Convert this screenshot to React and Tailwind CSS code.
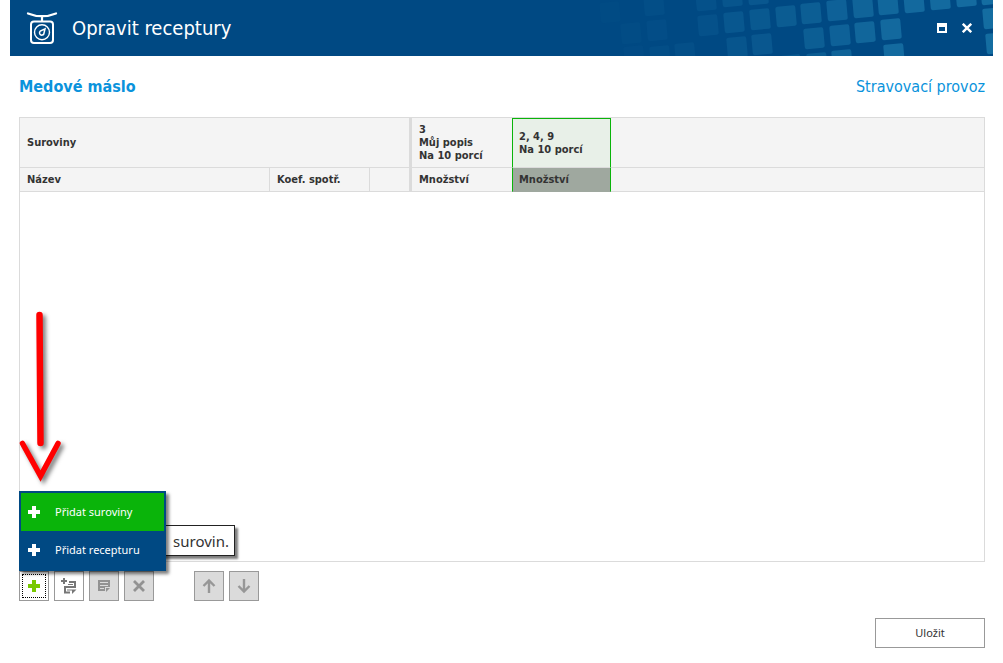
import React from "react";

const TILES = [
  [600, 2, 0.04], [644, -5, 0.1], [696, -10, 0.17], [722, -14, 0.22], [748, -16, 0.28],
  [621, 23, 0.07], [647, 20, 0.09], [698, 15, 0.17], [724, 12, 0.26], [750, 9, 0.3], [776, 6, 0.36], [801, 3, 0.4], [827, 0, 0.46], [853, -3, 0.5], [878, -6, 0.55], [904, -8, 0.6], [930, -11, 0.62], [956, -14, 0.64], [981, -16, 0.66],
  [624, 46, 0.06], [650, 46, 0.1], [675, 43, 0.12], [727, 37, 0.22], [752, 34, 0.28], [804, 28, 0.4], [830, 25, 0.46], [855, 22, 0.54], [881, 19, 0.6], [983, 8, 0.66],
  [781, 55, 0.3], [807, 53, 0.36], [832, 50, 0.48], [884, 44, 0.62], [986, 33, 0.66],
];

const Tiles = () => (
  <svg className="absolute top-0 right-0 h-full w-[403px]" viewBox="590 0 403 56" aria-hidden="true">
    {TILES.map(([x, y, o], i) => (
      <rect key={i} x={x} y={y} width="20" height="20.500" rx="2" fill="#1f7fb0" opacity={o} transform={`rotate(-5 ${x + 10} ${y + 10})`} />
    ))}
  </svg>
);

const Scale = () => (
  <svg className="size-8 shrink-0" viewBox="26 12 32 32" fill="none" stroke="#fff" aria-hidden="true">
    <path d="M28 13.400Q42 19 56 13.400M42 16v5" strokeWidth="2.2" strokeLinecap="round" />
    <rect x="31" y="21.500" width="22" height="21.500" rx="3" strokeWidth="2" />
    <circle cx="42" cy="32.300" r="7.500" strokeWidth="1.400" />
    <path d="M45 28.800L40.200 31.200a2.300 2.300 0 1 0 3.600 2.800z" strokeWidth="1.500" />
  </svg>
);

const Plus = ({ className }) => (
  <svg className={className} viewBox="0 0 12 12" fill="currentColor" aria-hidden="true">
    <path d="M4 0h4v4h4v4H8v4H4V8H0V4h4z" />
  </svg>
);

const ToolButton = ({ label, disabled, className = "", children }) => (
  <button
    type="button"
    aria-label={label}
    disabled={disabled}
    className={`flex size-[30px] items-center justify-center border border-[#999] text-[#777] ${disabled ? "bg-[#dbdbdb]" : "bg-white"} ${className}`}
  >
    {children}
  </button>
);

const Arrow = ({ down }) => (
  <svg className={`size-4 text-[#979797] ${down ? "rotate-180" : ""}`} viewBox="0 0 16 16" fill="none" stroke="currentColor" strokeWidth="2.4" aria-hidden="true">
    <path d="M8 15V2.500M2.500 8L8 2.500 13.500 8" />
  </svg>
);

export default function App() {
  return (
    <div className="flex min-h-screen flex-col bg-white px-[10px] pb-[15px] font-['DejaVu_Sans_Condensed','DejaVu_Sans',sans-serif] text-[#333]">
      <header className="relative flex h-14 items-center overflow-hidden bg-[#004983] pr-[21px] pl-4 text-white">
        <Tiles />
        <Scale />
        <h1 className="ml-3.5 grow text-[20px] leading-6">Opravit receptury</h1>
        <div className="relative flex items-center gap-[15px]">
          <button type="button" aria-label="Maximalizovat" className="h-[10px] w-[10px] border-2 border-t-4 border-white" />
          <button type="button" aria-label="Zavřít">
            <svg className="size-[10px]" viewBox="0 0 10 10" stroke="#fff" strokeWidth="2.4" aria-hidden="true">
              <path d="M.8.8l8.400 8.400M9.200.8L.8 9.200" />
            </svg>
          </button>
        </div>
      </header>

      <main className="flex grow flex-col pr-2 pl-[9px]">
        <div className="flex h-[61px] shrink-0 items-center justify-between text-[16px] leading-6 text-[#0a93dc]">
          <h2 className="font-bold">Medové máslo</h2>
          <a href="#provoz">Stravovací provoz</a>
        </div>

        <section className="relative grow border border-[#dbdbdb]">
          <table className="w-full table-fixed border-separate border-spacing-0 text-left text-[11px] leading-[13px] font-bold">
            <colgroup>
              <col className="w-[250px]" /><col className="w-[100px]" /><col className="w-[42px]" /><col className="w-[100px]" /><col className="w-[99px]" /><col />
            </colgroup>
            <thead className="bg-[#f4f4f4]">
              <tr className="h-[50px]">
                <th colSpan="3" className="border-r-3 border-b border-[#dbdbdb] px-[7px]">Suroviny</th>
                <th className="border-b border-[#dbdbdb] px-[7px]">3<br />Můj popis<br />Na 10 porcí</th>
                <th className="border border-[#0ab40a] border-b-[#dbdbdb] bg-[#e8f0e8] px-[6px]">2, 4, 9<br />Na 10 porcí</th>
                <td className="border-b border-[#dbdbdb]" />
              </tr>
              <tr className="h-6">
                <th className="border-r border-b border-[#dbdbdb] px-[7px]">Název</th>
                <th className="border-r border-b border-[#dbdbdb] px-[7px]">Koef. spotř.</th>
                <td className="border-r-3 border-b border-[#dbdbdb]" />
                <th className="border-b border-[#dbdbdb] px-[7px]">Množství</th>
                <th className="border-x border-b border-[#0ab40a] border-b-[#9fa89f] bg-[#9fa89f] px-[6px]">Množství</th>
                <td className="border-b border-[#dbdbdb]" />
              </tr>
            </thead>
          </table>

          <svg className="absolute bottom-[72px] -left-1 h-[184px] w-[54px]" viewBox="16 305 54 184" fill="none" stroke="#f00" aria-hidden="true">
            <g className="drop-shadow-[3px_3px_2px_rgba(0,0,0,0.5)]" strokeLinecap="round">
              <path d="M39.500 315L40.500 443" strokeWidth="6.500" />
              <path d="M22.500 443.500L40.500 476L58 443.500" strokeWidth="5.500" />
            </g>
          </svg>

          <div role="tooltip" className="absolute bottom-[5px] left-[119px] flex h-[31px] w-[96px] items-center justify-end border border-[#222] bg-white pr-[5px] font-['Noto_Sans',sans-serif] text-[15px] leading-6 shadow-[3px_3px_2px_rgba(0,0,0,0.5)]">
            surovin.
          </div>

          <div role="menu" className="absolute -bottom-[10px] -left-px w-[147px] border-2 border-[#004983] bg-[#004983] font-['Noto_Sans',sans-serif] text-[11px] text-white shadow-[3px_3px_3px_rgba(0,0,0,0.5)]">
            <button role="menuitem" type="button" className="flex h-[38px] w-full items-center gap-[15px] bg-[#0ab40a] pl-[7px]">
              <Plus className="size-3" />Přidat suroviny
            </button>
            <button role="menuitem" type="button" className="flex h-[38px] w-full items-center gap-[15px] pl-[7px]">
              <Plus className="size-3" />Přidat recepturu
            </button>
          </div>
        </section>

        <div className="mt-[9px] flex shrink-0 gap-[5px]">
          <button type="button" aria-label="Přidat" className="size-[30px] border border-[#999] bg-white p-[2px]">
            <span className="flex size-full items-center justify-center border border-dotted border-black text-[#78c800]">
              <Plus className="size-3" />
            </span>
          </button>
          <ToolButton label="Vložit řádek">
            <svg className="size-4" viewBox="0 0 16 16" fill="none" stroke="currentColor" aria-hidden="true">
              <path d="M0 3h6M3 0v6" strokeWidth="2" />
              <path d="M8 4h6v5H4v5.500h5" strokeWidth="2" />
              <path d="M7 6.500h5M6 12h5" />
              <path d="M11 11.500h4.500L11 16z" fill="currentColor" stroke="none" />
            </svg>
          </ToolButton>
          <ToolButton label="Upravit" disabled>
            <svg className="size-3 text-[#929292]" viewBox="0 0 12 12" fill="currentColor" aria-hidden="true">
              <path fillRule="evenodd" d="M0 0h12v7H7v4H0zM2 2v1h8V2zM2 5v1h8V5zM2 8v1h4V8zM8 8h4l-4 4z" />
            </svg>
          </ToolButton>
          <ToolButton label="Odstranit" disabled>
            <svg className="size-3 text-[#929292]" viewBox="0 0 12 12" stroke="currentColor" strokeWidth="2.800" aria-hidden="true">
              <path d="M1 1l10 10M11 1L1 11" />
            </svg>
          </ToolButton>
          <ToolButton label="Nahoru" disabled className="ml-[35px]"><Arrow /></ToolButton>
          <ToolButton label="Dolů" disabled><Arrow down /></ToolButton>
        </div>

        <button type="button" className="mt-[17px] h-[30px] w-[110px] shrink-0 self-end border border-[#999] bg-white font-['Noto_Sans',sans-serif] text-[11px]">
          Uložit
        </button>
      </main>
    </div>
  );
}
